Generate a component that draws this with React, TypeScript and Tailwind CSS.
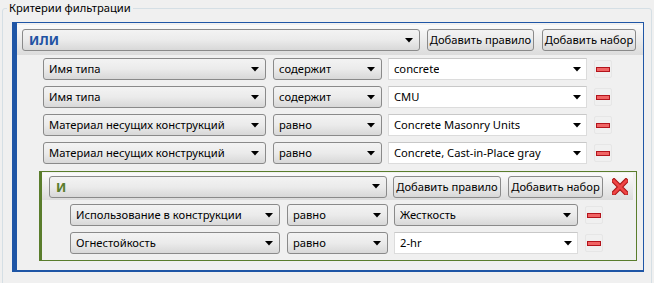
import React from "react";

const font = { fontFamily: '"Noto Sans", "Open Sans", sans-serif' };

function Arrow() {
  return (
    <svg width="8" height="5" viewBox="0 0 8 5" className="shrink-0">
      <path d="M0 0 L8 0 L4 4.5 Z" fill="#000" />
    </svg>
  );
}

function Combo({ text, w, className = "" }: { text: string; w: string; className?: string }) {
  return (
    <div
      className={`${w} h-[22px] shrink-0 flex items-center justify-between pl-[5px] pr-[6px] rounded-[3px] border border-[#8a8a8a] bg-gradient-to-b from-[#f3f3f3] via-[#ebebeb] to-[#d8d8d8] text-[11.2px] text-black ${className}`}
    >
      <span className="truncate leading-[16px]">{text}</span>
      <Arrow />
    </div>
  );
}

function EditCombo({ text, w }: { text: string; w: string }) {
  return (
    <div className={`${w} h-[22px] shrink-0 flex items-center justify-between pl-[5px] pr-[5px] border border-[#dcdcdc] border-t-[#c8c8c8] bg-white text-[11.2px] text-black`}>
      <span className="truncate leading-[16px]">{text}</span>
      <Arrow />
    </div>
  );
}

function Btn({ text, w }: { text: string; w: string }) {
  return (
    <div className={`${w} h-[22px] shrink-0 flex items-center justify-center rounded-[3px] border border-[#8a8a8a] bg-gradient-to-b from-[#f3f3f3] via-[#ebebeb] to-[#d8d8d8] text-[11.2px] leading-[16px] text-black whitespace-nowrap`}>
      {text}
    </div>
  );
}

function Minus() {
  return (
    <div className="w-[18px] h-[18px] shrink-0 flex items-center justify-center rounded-[2px] border border-[#e6e6e6]">
      <div className="w-[14px] h-[5px] bg-[#f06464] border border-[#b3141c]" />
    </div>
  );
}

function XIcon() {
  return (
    <svg width="16" height="17" viewBox="0 0 16 17" className="shrink-0">
      <path d="M2 3 L14 15 M14 3 L2 15" stroke="#a81414" strokeWidth="5" strokeLinecap="square" />
      <path d="M2 3 L14 15 M14 3 L2 15" stroke="#ee4444" strokeWidth="3" strokeLinecap="square" />
    </svg>
  );
}

function Row({
  field,
  op,
  value,
  widths,
  editable = true,
}: {
  field: string;
  op: string;
  value: string;
  widths: [string, string, string];
  editable?: boolean;
}) {
  return (
    <div className="flex items-center h-[22px]">
      <Combo text={field} w={widths[0]} />
      <Combo text={op} w={widths[1]} className="ml-[7px]" />
      <div className="ml-[6px]">
        {editable ? <EditCombo text={value} w={widths[2]} /> : <Combo text={value} w={widths[2]} />}
      </div>
      <div className="ml-[7px]">
        <Minus />
      </div>
    </div>
  );
}

export default function App() {
  return (
    <div className="w-[654px] h-[283px] bg-[#f0f0f0] overflow-hidden relative" style={font}>
      <div className="ml-[2px] mt-[8px] w-[650px] h-[300px] border border-[#d5dfe5] rounded-[3px] relative">
        <div className="absolute left-[4px] top-[-9px] px-[2px] bg-[#f0f0f0] text-[11.2px] leading-[16px] text-black">
          Критерии фильтрации
        </div>
        <div className="ml-[9px] mt-[13px] w-[632px] h-[250px] border-l-[5px] border-t border-r border-b-2 border-[#1f56a6] flex flex-col">
          <div className="mt-[2px] h-[30px] flex items-center bg-gradient-to-b from-[#fbfbfb] to-[#dcdcdc]">
            <div className="ml-[5px] w-[398px] h-[22px] flex items-center justify-between pl-[6px] pr-[6px] rounded-[3px] border border-[#8a8a8a] bg-gradient-to-b from-[#f3f3f3] via-[#ebebeb] to-[#d8d8d8]">
              <span className="text-[13px] font-bold text-[#2152a3] leading-[16px]">ИЛИ</span>
              <Arrow />
            </div>
            <div className="ml-[7px]">
              <Btn text="Добавить правило" w="w-[107px]" />
            </div>
            <div className="ml-[8px]">
              <Btn text="Добавить набор" w="w-[94px]" />
            </div>
          </div>
          <div className="ml-[26px] mt-[3px] flex flex-col gap-[6px]">
            <Row field="Имя типа" op="содержит" value="concrete" widths={["w-[223px]", "w-[109px]", "w-[199px]"]} />
            <Row field="Имя типа" op="содержит" value="CMU" widths={["w-[223px]", "w-[109px]", "w-[199px]"]} />
            <Row field="Материал несущих конструкций" op="равно" value="Concrete Masonry Units" widths={["w-[223px]", "w-[109px]", "w-[199px]"]} />
            <Row field="Материал несущих конструкций" op="равно" value="Concrete, Cast-in-Place gray" widths={["w-[223px]", "w-[109px]", "w-[199px]"]} />
          </div>
          <div className="ml-[22px] mt-[7px] w-[598px] h-[90px] border-l-[3px] border-t border-r border-b border-[#5a7d2c] flex flex-col">
            <div className="mt-[1px] h-[27px] mr-[3px] flex items-center bg-gradient-to-b from-[#fbfbfb] to-[#dcdcdc]">
              <div className="ml-[7px] w-[338px] h-[22px] flex items-center justify-between pl-[6px] pr-[6px] rounded-[3px] border border-[#8a8a8a] bg-gradient-to-b from-[#f3f3f3] via-[#ebebeb] to-[#d8d8d8]">
                <span className="text-[13px] font-bold text-[#5a7d2c] leading-[16px]">И</span>
                <Arrow />
              </div>
              <div className="ml-[6px]">
                <Btn text="Добавить правило" w="w-[108px]" />
              </div>
              <div className="ml-[7px]">
                <Btn text="Добавить набор" w="w-[95px]" />
              </div>
              <div className="ml-[9px]">
                <XIcon />
              </div>
            </div>
            <div className="ml-[28px] mt-[4px] flex flex-col gap-[6px]">
              <Row field="Использование в конструкции" op="равно" value="Жесткость" widths={["w-[210px]", "w-[101px]", "w-[184px]"]} editable={false} />
              <Row field="Огнестойкость" op="равно" value="2-hr" widths={["w-[210px]", "w-[101px]", "w-[184px]"]} />
            </div>
          </div>
        </div>
      </div>
    </div>
  );
}
